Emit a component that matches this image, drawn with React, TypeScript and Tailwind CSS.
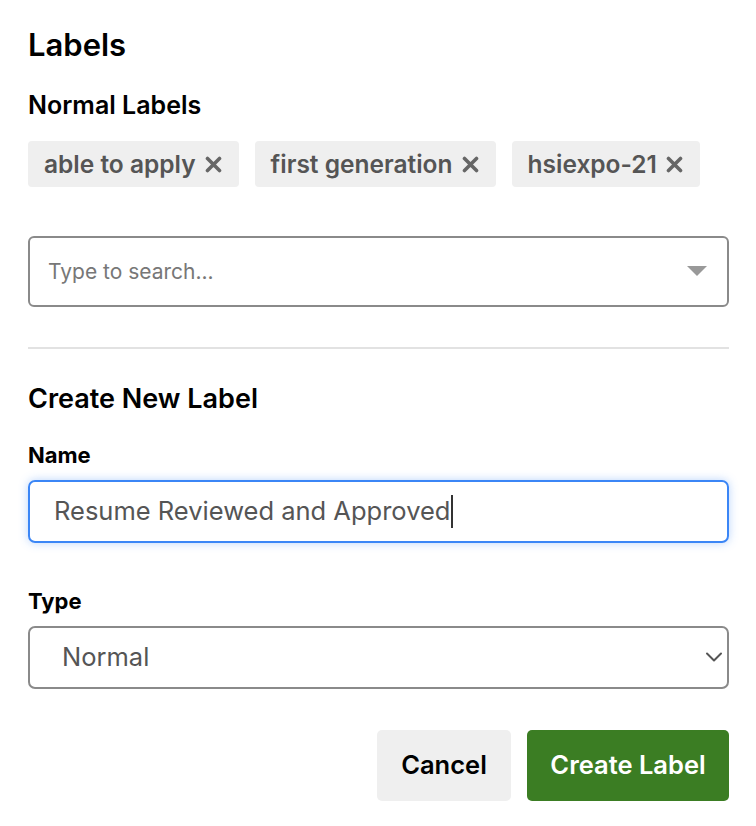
import React, { useState } from 'react';
import { ChevronDown } from 'lucide-react';

const initialLabels = ['able to apply', 'first generation', 'hsiexpo-21'];

const Chip: React.FC<{ text: string; onRemove: () => void }> = ({ text, onRemove }) => (
  <span className="inline-flex items-center h-[46px] pl-[16px] pr-[17px] rounded-[4px] bg-[#efefef] text-[#555] text-[24.5px] font-semibold">
    {text}
    <button onClick={onRemove} className="ml-[9px] text-[#666]">
      <svg width="17" height="17" viewBox="0 0 17 17">
        <path d="M2.5 2.5 L14.5 14.5 M14.5 2.5 L2.5 14.5" stroke="currentColor" strokeWidth="3.6" strokeLinecap="round" />
      </svg>
    </button>
  </span>
);

export default function App() {
  const [labels, setLabels] = useState(initialLabels);

  return (
    <div className="w-[756px] h-[826px] bg-white px-[28px] font-['Inter',sans-serif] text-black">
      {/* Existing labels */}
      <h1 className="pt-[28px] text-[31px] leading-[34px] font-semibold">Labels</h1>
      <h2 className="mt-[29px] text-[25px] leading-[28px] font-semibold">Normal Labels</h2>

      <div className="mt-[22px] flex gap-[16px]">
        {labels.map((l) => (
          <Chip key={l} text={l} onRemove={() => setLabels(labels.filter((x) => x !== l))} />
        ))}
      </div>

      {/* Search */}
      <div className="mt-[49px] h-[71px] w-[701px] flex items-center justify-between border-2 border-[#8a8a8a] rounded-[6px] pl-[18px] pr-[20px]">
        <span className="text-[21px] text-[#777]">Type to search...</span>
        <svg width="20" height="11" viewBox="0 0 20 11">
          <path d="M0 0 H20 L10 10 Z" fill="#999" />
        </svg>
      </div>

      <div className="mt-[40px] h-[2px] w-[701px] bg-[#e2e2e2]" />

      {/* Create new label */}
      <h2 className="mt-[34px] text-[27px] leading-[32px] font-semibold">Create New Label</h2>

      <label className="block mt-[27px] text-[22px] leading-[26px] font-bold">Name</label>
      <div className="mt-[12px] h-[63px] w-[701px] flex items-center border-2 border-[#3b86f6] rounded-[7px] pl-[24px] shadow-[0_0_10px_rgba(59,134,246,0.35)]">
        <span className="text-[25.5px] text-[#555]">Resume Reviewed and Approved</span>
        <span className="ml-[1px] h-[33px] w-[2px] bg-[#333]" />
      </div>

      <label className="block mt-[45px] text-[22px] leading-[26px] font-bold">Type</label>
      <div className="relative mt-[12px] w-[701px]">
        <select
          defaultValue="Normal"
          className="appearance-none h-[63px] w-full border-2 border-[#8a8a8a] rounded-[7px] bg-white pl-[32px] text-[25.5px] text-[#555] outline-none"
        >
          <option>Normal</option>
          <option>Priority</option>
        </select>
        <ChevronDown className="absolute right-[1px] top-[17px] h-[28px] w-[28px] text-[#555] pointer-events-none" strokeWidth={1.7} />
      </div>

      {/* Actions */}
      <div className="mt-[41px] w-[701px] flex justify-end gap-[16px]">
        <button className="h-[71px] w-[134px] rounded-[5px] bg-[#efefef] text-[25.5px] font-semibold text-black">
          Cancel
        </button>
        <button className="h-[71px] w-[202px] rounded-[5px] bg-[#3b7d23] text-[25.5px] font-semibold text-white">
          Create Label
        </button>
      </div>
    </div>
  );
}
